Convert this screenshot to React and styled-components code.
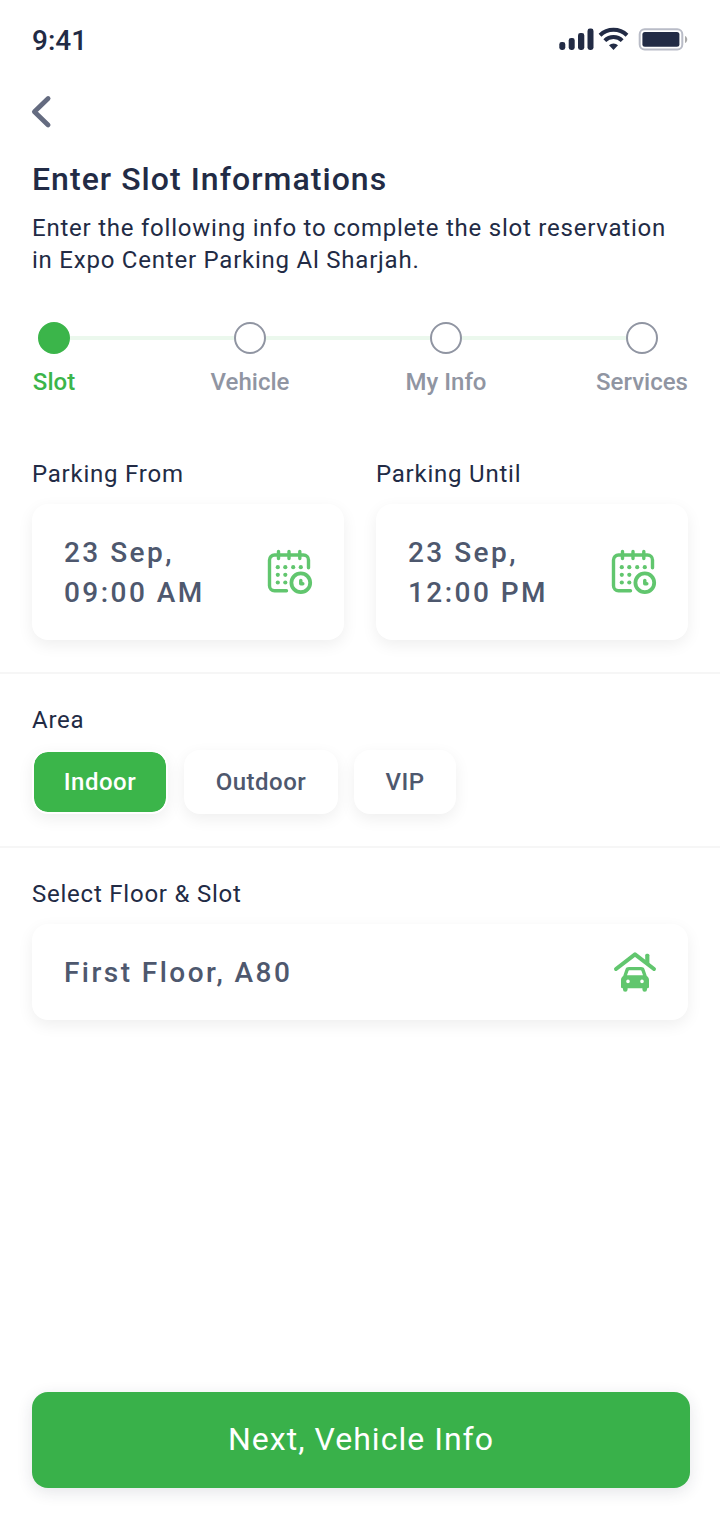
import React from 'react';
import styled, { createGlobalStyle } from 'styled-components';

const GlobalStyle = createGlobalStyle`
  *, *::before, *::after { box-sizing: border-box; }
  body {
    margin: 0;
    background: #fff;
    color: #222b45;
    font-family: Roboto, "Liberation Sans", sans-serif;
  }
  svg { display: block; flex: none; overflow: visible; }
`;

const Screen = styled.main`
  display: flex;
  flex-direction: column;
  width: 720px;
  height: 1520px;
  overflow: hidden;
`;

const StatusBar = styled.div`
  display: flex;
  align-items: center;
  justify-content: space-between;
  height: 80px;
  padding: 0 32px;
`;

const Time = styled.span`
  padding-top: 2px;
  font-size: 28px;
  font-weight: 500;
  line-height: 32px;
`;

const BackButton = styled.button`
  display: flex;
  align-items: center;
  width: 32px;
  height: 32px;
  margin: 16px 0 0 32px;
  padding: 0;
  border: 0;
  background: none;
`;

const Intro = styled.header`
  padding: 31px 32px 0;
`;

const Title = styled.h1`
  margin: 0;
  font-size: 32px;
  font-weight: 500;
  line-height: 40px;
  letter-spacing: 1.04px;
`;

const Subtitle = styled.p`
  margin: 13px 0 0;
  font-size: 24px;
  line-height: 32px;
  letter-spacing: 0.77px;
  white-space: nowrap;
`;

const Stepper = styled.nav`
  display: flex;
  height: 76px;
  margin-top: 46px;
  padding: 0 56px 0 32px;
`;

const Step = styled.div`
  display: flex;
  flex: none;
  flex-direction: column;
  align-items: center;
  width: 44px;
  color: ${(p) => (p.$active ? '#3bb54a' : '#9095a2')};
`;

const StepDot = styled.span`
  flex: none;
  width: 32px;
  height: 32px;
  border: 2px solid ${(p) => (p.$active ? '#3bb54a' : '#9095a2')};
  border-radius: 50%;
  background: ${(p) => (p.$active ? '#3bb54a' : 'transparent')};
`;

const StepLabel = styled.span`
  margin-top: 12px;
  font-size: 24px;
  font-weight: 500;
  line-height: 32px;
  white-space: nowrap;
`;

const Connector = styled.span`
  flex: 1;
  height: 4px;
  margin: 14px -6px 0;
  background: #ebf8ed;
`;

const Section = styled.section`
  display: flex;
  gap: 32px;
  padding: ${(p) => p.$top}px 32px 32px;
  border-bottom: ${(p) => (p.$divided ? '2px solid #f6f6f6' : '0')};
`;

const Field = styled.div`
  flex: 1;
`;

const FieldLabel = styled.div`
  margin-bottom: 14px;
  font-size: 24px;
  line-height: 32px;
  letter-spacing: 0.77px;
`;

const Card = styled.div`
  display: flex;
  align-items: center;
  justify-content: space-between;
  height: ${(p) => p.$height}px;
  padding: 0 ${(p) => p.$right}px 0 32px;
  border-radius: 16px;
  background: #fff;
  box-shadow: 0 5px 16px rgba(0, 0, 0, 0.065);
`;

const Value = styled.div`
  padding-top: 2px;
  color: #4e586e;
  font-size: 28px;
  font-weight: 500;
  line-height: 40px;
  letter-spacing: 2.45px;
  white-space: pre-line;
`;

const Chips = styled.div`
  display: flex;
  gap: 16px;
`;

const Chip = styled.button`
  width: ${(p) => p.$width}px;
  height: 64px;
  padding: 0;
  border: 2px solid #fff;
  border-radius: 16px;
  background: ${(p) => (p.$active ? '#3bb54a' : '#fff')};
  background-clip: padding-box;
  box-shadow: 0 5px 16px rgba(0, 0, 0, 0.065);
  color: ${(p) => (p.$active ? '#fff' : '#4e586e')};
  font: 500 24px/32px Roboto, "Liberation Sans", sans-serif;
  letter-spacing: 0.5px;
`;

const NextButton = styled.button`
  height: 96px;
  margin: auto 30px 32px 32px;
  padding: 0 0 2px;
  border: 0;
  border-radius: 16px;
  background: #39b14a;
  box-shadow: 0 4px 16px rgba(34, 43, 69, 0.12);
  color: #fff;
  font: 400 32px/40px Roboto, "Liberation Sans", sans-serif;
  letter-spacing: 1.02px;
`;

const StatusIcons = () => (
  <svg width="130" height="24" viewBox="0 0 130 24" fill="#222b45">
    <rect x="1.3" y="14" width="6" height="8" rx="2.4" />
    <rect x="10.7" y="10" width="6" height="12" rx="2.4" />
    <rect x="20" y="5" width="6.3" height="17" rx="2.4" />
    <rect x="29.5" y="0.5" width="6" height="21.5" rx="2.4" />
    <path d="M42 7.2a19.6 19.6 0 0 1 27 0" fill="none" stroke="#222b45" strokeWidth="4" />
    <path d="M46.8 12.6a12.4 12.4 0 0 1 17.4 0" fill="none" stroke="#222b45" strokeWidth="4" />
    <path d="M51 17.2a6.6 6.6 0 0 1 9 0l-4.5 4.8z" />
    <rect x="81.7" y="1.2" width="42.6" height="20.3" rx="5" fill="none" stroke="#b9bcc7" strokeWidth="2" />
    <rect x="84.4" y="4" width="37" height="14.8" rx="2.5" />
    <path d="M127 8v7c3-1.2 3-5.8 0-7z" fill="#aaa" />
  </svg>
);

const BackIcon = () => (
  <svg width="20" height="32" viewBox="0 0 20 32" fill="none" stroke="#646b80" strokeWidth="4.8" strokeLinecap="round" strokeLinejoin="round">
    <path d="M16.1 2.5 2.4 15.8l13.7 13.1" />
  </svg>
);

const CalendarIcon = () => (
  <svg width="46" height="46" viewBox="0 0 46 46" fill="none" stroke="#61c66e" strokeLinecap="round">
    <path d="M19.5 41.8H7.5a5 5 0 0 1-5-5V11a5 5 0 0 1 5-5h29a5 5 0 0 1 5 5v7.8" strokeWidth="3.4" />
    <path d="M11.5 2.5v7M22 2.5v7M32.8 2.5v7" strokeWidth="3.4" />
    <g fill="#61c66e" stroke="none">
      {[10.8, 18.3, 26.2, 33.8].map((x) => <circle key={x} cx={x} cy="18.2" r="2.1" />)}
      {[25.8, 33.5].map((y) => [10.8, 18.3].map((x) => <circle key={`${x}-${y}`} cx={x} cy={y} r="2.1" />))}
    </g>
    <circle cx="33.8" cy="33.7" r="9.4" strokeWidth="3.8" />
    <path d="M33.8 31.6v3.1h2" strokeWidth="3.5" strokeLinejoin="round" />
  </svg>
);

const GarageIcon = () => (
  <svg width="42" height="41" viewBox="0 0 42 41" fill="#61c66e">
    <path d="m2 17 19-14.7L40 17" fill="none" stroke="#61c66e" strokeWidth="4" strokeLinecap="round" strokeLinejoin="round" />
    <path d="M31.2 3.300a1.500 1.500 0 0 1 1.500-1.500h1.200a1.500 1.500 0 0 1 1.500 1.500v10l-4.200-3z" />
    <path
      fillRule="evenodd"
      d="M15 15h12c2 0 3 .8 3.6 2.4l2.2 6.6c1.4 1 2.2 2.2 2.2 4v7c0 .7-.5 1.2-1.2 1.2H33v1.200a2.300 2.300 0 0 1-4.600 0v-1.200H13.600v1.200a2.300 2.300 0 0 1-4.600 0v-1.200h-.8c-.7 0-1.200-.5-1.200-1.200v-7c0-1.800.8-3 2.200-4l2.200-6.600C12 15.800 13 15 15 15zm.8 3.300c-.8 0-1.200.3-1.400 1L13 23.200h16l-1.400-3.900c-.2-.7-.6-1-1.400-1zM14 27.600a1.800 1.800 0 1 0 0 3.600 1.800 1.800 0 0 0 0-3.600zm14 0a1.800 1.800 0 1 0 0 3.600 1.800 1.800 0 0 0 0-3.600z"
    />
  </svg>
);

const STEPS = ['Slot', 'Vehicle', 'My Info', 'Services'];
const PERIODS = [
  { label: 'Parking From', value: '23 Sep,\n09:00 AM' },
  { label: 'Parking Until', value: '23 Sep,\n12:00 PM' },
];
const AREAS = [
  { name: 'Indoor', width: 136 },
  { name: 'Outdoor', width: 154 },
  { name: 'VIP', width: 102 },
];

export default function App() {
  return (
    <Screen>
      <GlobalStyle />
      <StatusBar>
        <Time>9:41</Time>
        <StatusIcons />
      </StatusBar>
      <BackButton aria-label="Back"><BackIcon /></BackButton>
      <Intro>
        <Title>Enter Slot Informations</Title>
        <Subtitle>
          Enter the following info to complete the slot reservation
          <br />
          in Expo Center Parking Al Sharjah.
        </Subtitle>
      </Intro>
      <Stepper>
        {STEPS.map((name, i) => (
          <React.Fragment key={name}>
            {i > 0 && <Connector />}
            <Step $active={i === 0}>
              <StepDot $active={i === 0} />
              <StepLabel>{name}</StepLabel>
            </Step>
          </React.Fragment>
        ))}
      </Stepper>
      <Section $top={60} $divided>
        {PERIODS.map(({ label, value }) => (
          <Field key={label}>
            <FieldLabel>{label}</FieldLabel>
            <Card $height={136} $right={31}>
              <Value>{value}</Value>
              <CalendarIcon />
            </Card>
          </Field>
        ))}
      </Section>
      <Section $top={30} $divided>
        <Field>
          <FieldLabel>Area</FieldLabel>
          <Chips>
            {AREAS.map(({ name, width }, i) => (
              <Chip key={name} $width={width} $active={i === 0}>{name}</Chip>
            ))}
          </Chips>
        </Field>
      </Section>
      <Section $top={30}>
        <Field>
          <FieldLabel>Select Floor &amp; Slot</FieldLabel>
          <Card $height={96} $right={32}>
            <Value>First Floor, A80</Value>
            <GarageIcon />
          </Card>
        </Field>
      </Section>
      <NextButton>Next, Vehicle Info</NextButton>
    </Screen>
  );
}
